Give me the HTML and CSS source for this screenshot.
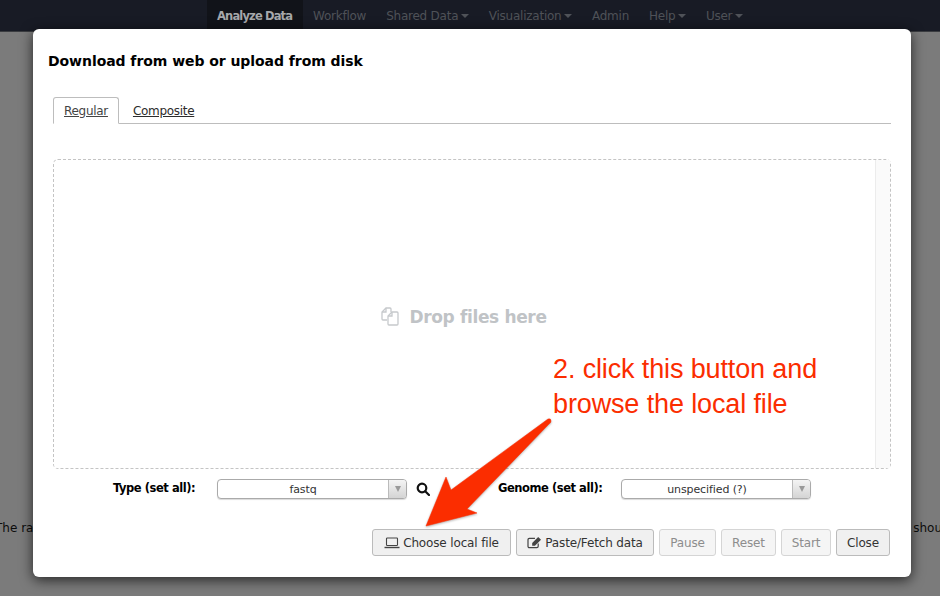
FILE: index.html
```html
<!DOCTYPE html>
<html lang="en">
<head>
<meta charset="utf-8">
<title>Download from web or upload from disk</title>
<link rel="stylesheet" href="styles.css">
</head>
<body>
<nav class="nav">
  <a class="nav-item active">Analyze Data</a>
  <a class="nav-item">Workflow</a>
  <a class="nav-item caret">Shared Data</a>
  <a class="nav-item caret">Visualization</a>
  <a class="nav-item">Admin</a>
  <a class="nav-item caret">Help</a>
  <a class="nav-item caret">User</a>
</nav>
<main class="page">
  <p class="bgline"><span>The raw</span><span>shou</span></p>
</main>
<section class="modal">
  <h1 class="title">Download from web or upload from disk</h1>
  <div class="tabs">
    <a class="tab current">Regular</a>
    <a class="tab">Composite</a>
  </div>
  <div class="drop">
    <div class="drop-main">
      <svg class="files" viewBox="0 0 20 20" width="20" height="20" fill="none" stroke="#c6c9cc" stroke-width="1.300">
        <path d="M7 13H3q-1 0-1-1V5l4-4h4q1 0 1 1v3"/>
        <path d="M6 1v4H2"/>
        <path d="M12 5h5q1 0 1 1v11q0 1-1 1H9q-1 0-1-1V9z"/>
        <path d="M12 5v4H8"/>
      </svg>
      <span class="drop-text">Drop files here</span>
    </div>
    <div class="drop-side"></div>
  </div>
  <div class="settings">
    <span class="lab lab-type">Type (set all):</span>
    <div class="select"><span class="sel-val">fastq</span><span class="sel-btn"></span></div>
    <svg class="search" viewBox="0 0 14 14" width="14" height="14" fill="none" stroke="#111" stroke-width="2.200">
      <circle cx="6" cy="6" r="4.300"/>
      <path d="M9.200 9.200l3.800 3.800" stroke-linecap="round"/>
    </svg>
    <span class="lab lab-genome">Genome (set all):</span>
    <div class="select"><span class="sel-val">unspecified (?)</span><span class="sel-btn"></span></div>
  </div>
  <div class="actions">
    <button class="btn w-choose">
      <svg viewBox="0 0 16 12" width="16" height="12" fill="none" stroke="#444" stroke-width="1.100">
        <rect x="2.500" y="1" width="11" height="7.500" rx=".8"/>
        <path d="M.5 10.500h15" stroke-width="1.400"/>
      </svg>
      Choose local file
    </button>
    <button class="btn w-paste">
      <svg viewBox="0 0 16 14" width="15" height="13" fill="none" stroke="#444" stroke-width="1.300">
        <path d="M12 8v3q0 1.500-1.500 1.500h-8q-1.500 0-1.500-1.500v-7q0-1.500 1.500-1.500h6"/>
        <path d="M5.500 7.500l6.500-6.500 3 3-6.500 6.500h-3z" fill="#444" stroke="none"/>
      </svg>
      Paste/Fetch data
    </button>
    <button class="btn off w-pause">Pause</button>
    <button class="btn off w-reset">Reset</button>
    <button class="btn off w-start">Start</button>
    <button class="btn w-close">Close</button>
  </div>
</section>
<p class="note">2. click this button and<br>browse the local file</p>
<svg class="arrow" viewBox="0 0 140 120" width="140" height="120">
  <path d="M11 116L31 67l5 13L133 9q3-1 3 2q0 2-2 3L52 99l10 4z" fill="#fb2d00" stroke="#fb2d00" stroke-width=".5" stroke-linejoin="round"/>
</svg>
</body>
</html>
```
FILE: styles.css
```css
* { box-sizing: border-box; }
html, body { margin: 0; height: 596px; overflow: hidden; }
body {
  position: relative;
  background: #7b7b7b;
  font-family: "DejaVu Sans", sans-serif;
  font-size: 12px;
  color: #111;
}
.nav {
  height: 32px;
  background: #181b25;
  border-bottom: 1px solid #3a3c40;
  display: flex;
  padding-left: 207px;
}
.nav-item {
  padding: 0 10px;
  line-height: 30px;
  color: #4f5258;
  font-size: 12px;
  letter-spacing: -.24px;
  display: flex;
  align-items: center;
}
.nav-item.active {
  background: #111319;
  color: #a6a8ab;
  font-size: 11.5px;
  font-weight: bold;
  letter-spacing: -.85px;
  width: 96px;
  white-space: nowrap;
}
.caret::after {
  content: "";
  margin-left: 2.500px;
  border-top: 4px solid #4f5258;
  border-left: 4px solid transparent;
  border-right: 4px solid transparent;
}
.page { padding-top: 487px; }
.bgline {
  margin: 0 -2px 0 -5px;
  display: flex;
  justify-content: space-between;
  font-size: 12px;
  line-height: 18px;
  color: #0c0c0c;
}
.modal {
  position: absolute;
  left: 33px;
  top: 29px;
  width: 878px;
  height: 548px;
  background: #fff;
  border-radius: 6px;
  box-shadow: 0 3px 13px rgba(0, 0, 0, .7);
  padding: 0 20px 0 15px;
  display: flex;
  flex-direction: column;
}
.title {
  margin: 22px 0 0;
  font-size: 14px;
  line-height: 20px;
  font-weight: bold;
  color: #000;
  letter-spacing: -.06px;
}
.tabs {
  margin: 26px 0 0 5px;
  height: 27px;
  display: flex;
  border-bottom: 1px solid #bdbdbd;
}
.tab {
  height: 27px;
  padding: 5px 10px 0;
  margin-right: 3px;
  border: 1px solid transparent;
  border-radius: 3px 3px 0 0;
  text-decoration: underline;
  color: #2c2c2c;
  font-size: 12px;
  line-height: 16px;
  letter-spacing: -.3px;
}
.tab.current {
  border-color: #bdbdbd #bdbdbd #fff;
  background: #fff;
  color: #444;
}
.drop {
  margin: 35px 0 0 5px;
  height: 310px;
  border: 1px dashed #c4c4c4;
  border-radius: 5px;
  display: flex;
}
.drop-main {
  flex: 1;
  display: flex;
  align-items: center;
  justify-content: center;
  gap: 9px;
  padding: 6px 2px 0 0;
}
.drop-text {
  font-size: 17px;
  font-weight: bold;
  color: #c0c3c6;
  letter-spacing: -.35px;
}
.drop-side {
  width: 15px;
  background: #fafafa;
  border-left: 1px solid #ececec;
}
.settings {
  margin: 9px 0 0 65px;
  height: 21px;
  display: flex;
  align-items: center;
}
.lab {
  font-weight: bold;
  font-size: 11.5px;
  color: #000;
  letter-spacing: -.45px;
  width: 104px;
  padding-bottom: 1px;
}
.lab-genome { width: 123px; }
.select {
  width: 190px;
  height: 20px;
  border: 1px solid #aaa;
  border-radius: 4px;
  display: flex;
  box-shadow: 0 1px 1px rgba(0, 0, 0, .15);
  background: #fff;
}
.sel-val {
  flex: 1;
  text-align: center;
  font-size: 11px;
  line-height: 19px;
  color: #333;
  letter-spacing: -.1px;
}
.sel-btn {
  width: 18px;
  border-left: 1px solid #bbb;
  background: linear-gradient(#f4f4f4, #d4d4d4);
  border-radius: 0 3px 3px 0;
  display: flex;
  align-items: center;
  justify-content: center;
}
.sel-btn::after {
  content: "";
  border-top: 6px solid #999;
  border-left: 3px solid transparent;
  border-right: 3px solid transparent;
}
.search { margin: 0 68px 0 9px; }
.actions {
  margin: 30px 0 0 324px;
  display: flex;
  gap: 5px;
}
.btn {
  height: 27px;
  border: 1px solid #bbb;
  border-radius: 3px;
  background: #f0f0f0;
  font-family: inherit;
  font-size: 12px;
  letter-spacing: -.15px;
  color: #333;
  padding: 0;
  display: flex;
  align-items: center;
  justify-content: center;
  gap: 3px;
}
.btn.off { color: #8d8d8d; border-color: #d5d5d5; background: #f5f5f5; }
.w-choose { width: 139px; }
.w-paste { width: 138px; }
.w-pause { width: 57px; }
.w-reset { width: 55px; }
.w-start { width: 50px; }
.w-close { width: 54px; }
.note {
  position: absolute;
  left: 553px;
  top: 352px;
  margin: 0;
  font-family: "Liberation Sans", sans-serif;
  font-size: 27px;
  line-height: 35px;
  letter-spacing: -.13px;
  color: #fb2d00;
  white-space: nowrap;
}
.arrow {
  position: absolute;
  left: 415px;
  top: 410px;
  filter: drop-shadow(0 1px 1px rgba(0, 0, 0, .3));
}
```
